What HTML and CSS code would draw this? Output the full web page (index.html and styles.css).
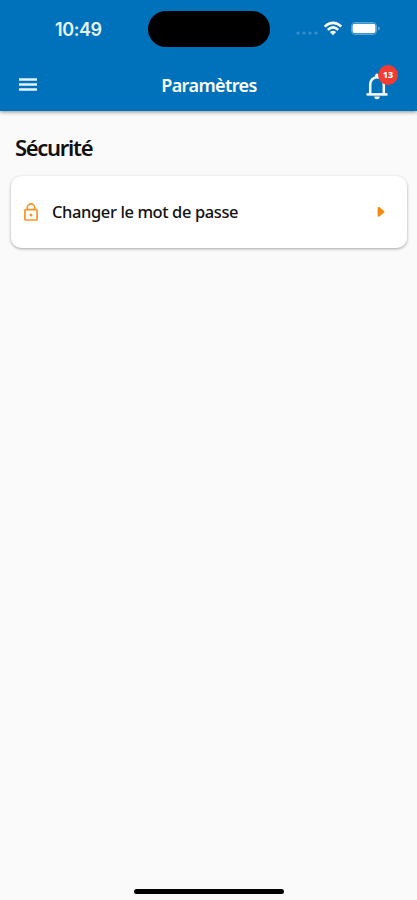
FILE: index.html
```html
<!DOCTYPE html>
<html lang="fr">
<head>
  <meta charset="UTF-8">
  <meta name="viewport" content="width=device-width, initial-scale=1">
  <title>Paramètres</title>
  <link rel="stylesheet" href="styles.css">
</head>
<body>
  <header>
    <div class="status-bar">
      <span class="time">10:49</span>
      <div class="island"></div>
      <div class="status-icons">
        <svg class="dots" width="22" height="4" viewBox="0 0 22 4">
          <circle cx="2" cy="2" r="1.6"/><circle cx="8" cy="2" r="1.6"/>
          <circle cx="14" cy="2" r="1.6"/><circle cx="20" cy="2" r="1.6"/>
        </svg>
        <svg class="wifi" width="20" height="15" viewBox="0 0 20 15">
          <path d="M1.7 5.6Q10 -2 18.3 5.6M4.8 8.9Q10 4 15.2 8.9"/>
          <path class="fill" d="M6.9 11.1Q10 8.3 13.1 11.1L10 14.3Z"/>
        </svg>
        <svg class="battery" width="30" height="13" viewBox="0 0 30 13">
          <rect class="shell" x="0.5" y="0.5" width="25" height="12" rx="3.5"/>
          <rect x="1.5" y="1.7" width="23" height="9.6" rx="2.2"/>
          <path class="tip" d="M27 4.5Q29 5 29 6.5T27 8.5Z"/>
        </svg>
      </div>
    </div>
    <div class="app-bar">
      <button class="menu" aria-label="Menu">
        <svg width="18" height="13" viewBox="0 0 18 13">
          <path d="M0 1.5H18M0 6.5H18M0 11.5H18"/>
        </svg>
      </button>
      <h1>Paramètres</h1>
      <button class="bell" aria-label="Notifications">
        <svg width="22" height="27" viewBox="0 0 22 27">
          <path d="M4.2 21V11.5C4.2 7.5 7 4.3 11 4.3S17.8 7.5 17.8 11.5V21"/>
          <path d="M0.5 21.4H21.5"/>
          <path class="fill" d="M9.2 4V2.2A1.8 1.8 0 0 1 12.8 2.2V4ZM8.3 23.6H13.7A2.7 2.7 0 0 1 8.3 23.6Z"/>
        </svg>
        <span class="badge">13</span>
      </button>
    </div>
  </header>

  <main>
    <h2>Sécurité</h2>
    <a class="card">
      <svg class="lock" width="14" height="18" viewBox="0 0 14 18">
        <rect x="0.9" y="6.6" width="12.2" height="10.4" rx="0.8"/>
        <path d="M3.3 6.6V4.6A3.7 3.7 0 0 1 10.7 4.6V6.6"/>
        <circle cx="7" cy="11.9" r="1.5"/>
      </svg>
      <span class="label">Changer le mot de passe</span>
      <svg class="arrow" width="8" height="12" viewBox="0 0 8 12">
        <path d="M0.6 1.4L2 0.8L7.4 5.3V6.2L2 10.8L0.6 10.2Z"/>
      </svg>
    </a>
  </main>

  <div class="home-indicator"></div>
</body>
</html>
```
FILE: styles.css
```css
* {
  box-sizing: border-box;
}
body {
  margin: 0;
  height: 900px;
  display: flex;
  flex-direction: column;
  background: #fafafa;
  color: #111;
  font-family: "Noto Sans", sans-serif;
  overflow: hidden;
}
header {
  height: 111px;
  background: #0071bb;
  color: #fff;
  box-shadow: 0 1px 4px rgba(0, 0, 0, 0.45);
}
button {
  padding: 0;
  border: none;
  background: none;
  color: inherit;
  font-family: inherit;
}
svg {
  display: block;
}
.status-bar {
  height: 58px;
  padding-top: 11px;
  display: grid;
  grid-template-columns: 148px 122px 1fr;
}
.time {
  padding-left: 55px;
  font: 600 18px/37px Inter, sans-serif;
  letter-spacing: -0.4px;
  color: #e6f4ff;
}
.island {
  height: 36px;
  border-radius: 18px;
  background: #000;
}
.status-icons {
  height: 34px;
  padding-left: 26px;
  display: flex;
  align-items: center;
  fill: #fff;
}
.dots {
  margin-top: 10px;
  fill: #3a90cc;
}
.wifi {
  margin-left: 5px;
  fill: none;
  stroke: #fff;
  stroke-width: 2.6;
}
.wifi .fill {
  fill: #fff;
  stroke: none;
}
.battery {
  margin-left: 8px;
}
.shell {
  fill: none;
  stroke: #5aa5d8;
}
.tip {
  fill: #5aa5d8;
}
.app-bar {
  height: 53px;
  padding: 0 29px 0 19px;
  display: grid;
  grid-template-columns: 40px 1fr 22px;
  align-items: center;
}
.menu svg {
  stroke: #e2f2ff;
  stroke-width: 2.4;
}
h1 {
  margin: 0 0 0 -7px;
  text-align: center;
  font-size: 18px;
  font-weight: 600;
  letter-spacing: -0.6px;
}
.bell {
  position: relative;
}
.bell svg {
  margin-top: 3px;
  fill: none;
  stroke: #fff;
  stroke-width: 2.5;
}
.bell .fill {
  fill: #fff;
  stroke: none;
}
.badge {
  position: absolute;
  top: -5px;
  left: 12px;
  width: 20px;
  height: 20px;
  border-radius: 50%;
  background: #f23c31;
  font-size: 9px;
  font-weight: 800;
  line-height: 20px;
  text-align: center;
}
main {
  flex: 1;
  padding: 21px 10px 0 11px;
}
h2 {
  margin: 0 0 14px 4px;
  font-size: 22px;
  font-weight: 600;
  line-height: 30px;
  letter-spacing: -1.3px;
}
.card {
  height: 72px;
  padding: 0 22px 0 13px;
  display: flex;
  align-items: center;
  background: #fff;
  border-radius: 10px;
  box-shadow: 0 1px 3px rgba(0, 0, 0, 0.35);
}
.lock {
  fill: none;
  stroke: #f8952b;
  stroke-width: 1.7;
}
.lock circle {
  fill: #f8952b;
  stroke: none;
}
.label {
  flex: 1;
  margin-left: 14px;
  padding-bottom: 2px;
  font-size: 16.5px;
  font-weight: 500;
  letter-spacing: -0.4px;
}
.arrow {
  fill: #f28c0f;
}
.home-indicator {
  width: 150px;
  height: 5px;
  margin: 0 auto 6px 134px;
  border-radius: 3px;
  background: #000;
}
```
